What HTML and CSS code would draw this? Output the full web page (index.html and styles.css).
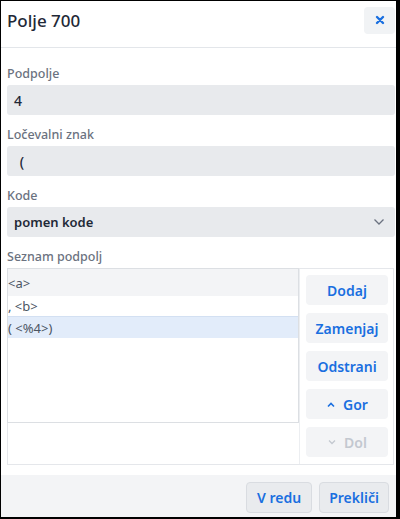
FILE: index.html
```html
<!DOCTYPE html>
<html lang="sl">
<head>
<meta charset="utf-8">
<title>Polje 700</title>
<link rel="stylesheet" href="styles.css">
</head>
<body>
<div class="dialog">
  <header class="head">
    <h1 class="title">Polje 700</h1>
    <button class="close" aria-label="Zapri">
      <svg width="10" height="10" viewBox="0 0 10 10"><path d="M2 2L8 8M8 2L2 8" stroke="#1a6fe0" stroke-width="2.4" stroke-linecap="round"/></svg>
    </button>
  </header>
  <main class="body">
    <div class="field">
      <label class="label">Podpolje</label>
      <div class="input">4</div>
    </div>
    <div class="field">
      <label class="label">Ločevalni znak</label>
      <div class="input pre"> (</div>
    </div>
    <div class="field">
      <label class="label">Kode</label>
      <div class="input select">
        <span>pomen kode</span>
        <svg width="12" height="8" viewBox="0 0 12 8"><path d="M1.5 1.5L6 6L10.5 1.5" fill="none" stroke="#6b7280" stroke-width="1.3"/></svg>
      </div>
    </div>
    <div class="field">
      <label class="label">Seznam podpolj</label>
      <div class="listwrap">
        <div class="leftcol">
          <div class="list">
            <div class="item hover">&lt;a&gt;</div>
            <div class="item short">, &lt;b&gt;</div>
            <div class="item sel">( &lt;%4&gt;)</div>
          </div>
        </div>
        <div class="rightcol">
          <button class="sbtn">Dodaj</button>
          <button class="sbtn">Zamenjaj</button>
          <button class="sbtn">Odstrani</button>
          <button class="sbtn"><svg width="10" height="7" viewBox="0 0 10 7"><path d="M2 5.5L5 2.5L8 5.5" fill="none" stroke="#1a6fe0" stroke-width="1.6"/></svg>Gor</button>
          <button class="sbtn dis"><svg width="10" height="7" viewBox="0 0 10 7"><path d="M2 1.5L5 4.5L8 1.5" fill="none" stroke="#c3c8d0" stroke-width="1.3"/></svg>Dol</button>
        </div>
      </div>
    </div>
  </main>
  <footer class="foot">
    <button class="fbtn ok">V redu</button>
    <button class="fbtn cancel">Prekliči</button>
  </footer>
</div>
</body>
</html>
```
FILE: styles.css
```css
* { box-sizing: border-box; }
html, body { margin: 0; padding: 0; background: #000; }
body { font-family: "Noto Sans", "Open Sans", sans-serif; }
.dialog {
  width: 400px;
  height: 519px;
  background: #fff;
  border-top: 1px solid #000;
  border-left: 1px solid #000;
  border-right: 4px solid #000;
  border-bottom: 2px solid #000;
  display: flex;
  flex-direction: column;
}
.head {
  height: 47px;
  border-bottom: 1px solid #e3e6ea;
  display: flex;
  align-items: center;
  justify-content: space-between;
  padding: 0 1px 0 6px;
}
.title {
  margin: 0;
  font-size: 17px;
  font-weight: 500;
  color: #1f2937;
  line-height: 24px;
  margin-top: -6px;
}
.close {
  width: 31px;
  height: 27px;
  border: none;
  border-radius: 4px;
  background: #f1f3f5;
  display: flex;
  align-items: center;
  justify-content: center;
  padding: 0;
  margin-top: -8px;
}
.body {
  flex: 1;
  padding: 17px 1px 0 6px;
  display: flex;
  flex-direction: column;
  gap: 11px;
}
.field { display: flex; flex-direction: column; gap: 2px; }
.label {
  font-size: 12.5px;
  line-height: 18px;
  color: #6b7280;
  font-weight: 500;
}
.input {
  height: 30px;
  background: #e8eaed;
  border-radius: 3px;
  padding: 0 7px;
  display: flex;
  align-items: center;
  font-size: 14px;
  font-weight: 500;
  color: #1f2937;
}
.pre { white-space: pre; padding-left: 9px; }
.select { justify-content: space-between; font-weight: 600; font-size: 13px; padding-right: 10px; }
.listwrap {
  height: 197px;
  width: 387px;
  border: 1px solid #e5e7eb;
  display: flex;
}
.leftcol { width: 292px; margin: -1px 0 0 -1px; }
.list {
  height: 155px;
  border: 1px solid #dcdfe3;
  font-size: 13px;
  color: #4b5563;
}
.item { height: 22px; display: flex; align-items: center; padding-left: 0; }
.item.hover { height: 27px; background: #f3f4f6; }
.item.short { height: 20px; }
.item.sel { background: #e2ecfa; border-top: 1px solid #d3e0f2; }
.rightcol {
  flex: 1;
  border-left: 1px solid #eceef1;
  padding: 6px 5px 0 6px;
  display: flex;
  flex-direction: column;
  gap: 8px;
}
.sbtn {
  height: 30px;
  border: none;
  border-radius: 4px;
  background: #f3f4f6;
  color: #1a6fe0;
  font-family: inherit;
  font-size: 14px;
  font-weight: 600;
  display: flex;
  align-items: center;
  justify-content: center;
  gap: 7px;
  padding: 0;
}
.sbtn.dis { color: #c3c8d0; }
.foot {
  height: 42px;
  margin-top: 10px;
  background: #f3f4f6;
  display: flex;
  justify-content: flex-end;
  align-items: flex-start;
  gap: 7px;
  padding: 7px 7px 0 0;
}
.fbtn {
  height: 31px;
  border: 1px solid #d9dce1;
  border-radius: 4px;
  background: #e9ebee;
  color: #1a6fe0;
  font-family: inherit;
  font-size: 14px;
  font-weight: 600;
  padding: 0;
}
.ok { width: 66px; }
.cancel { width: 70px; }
```
